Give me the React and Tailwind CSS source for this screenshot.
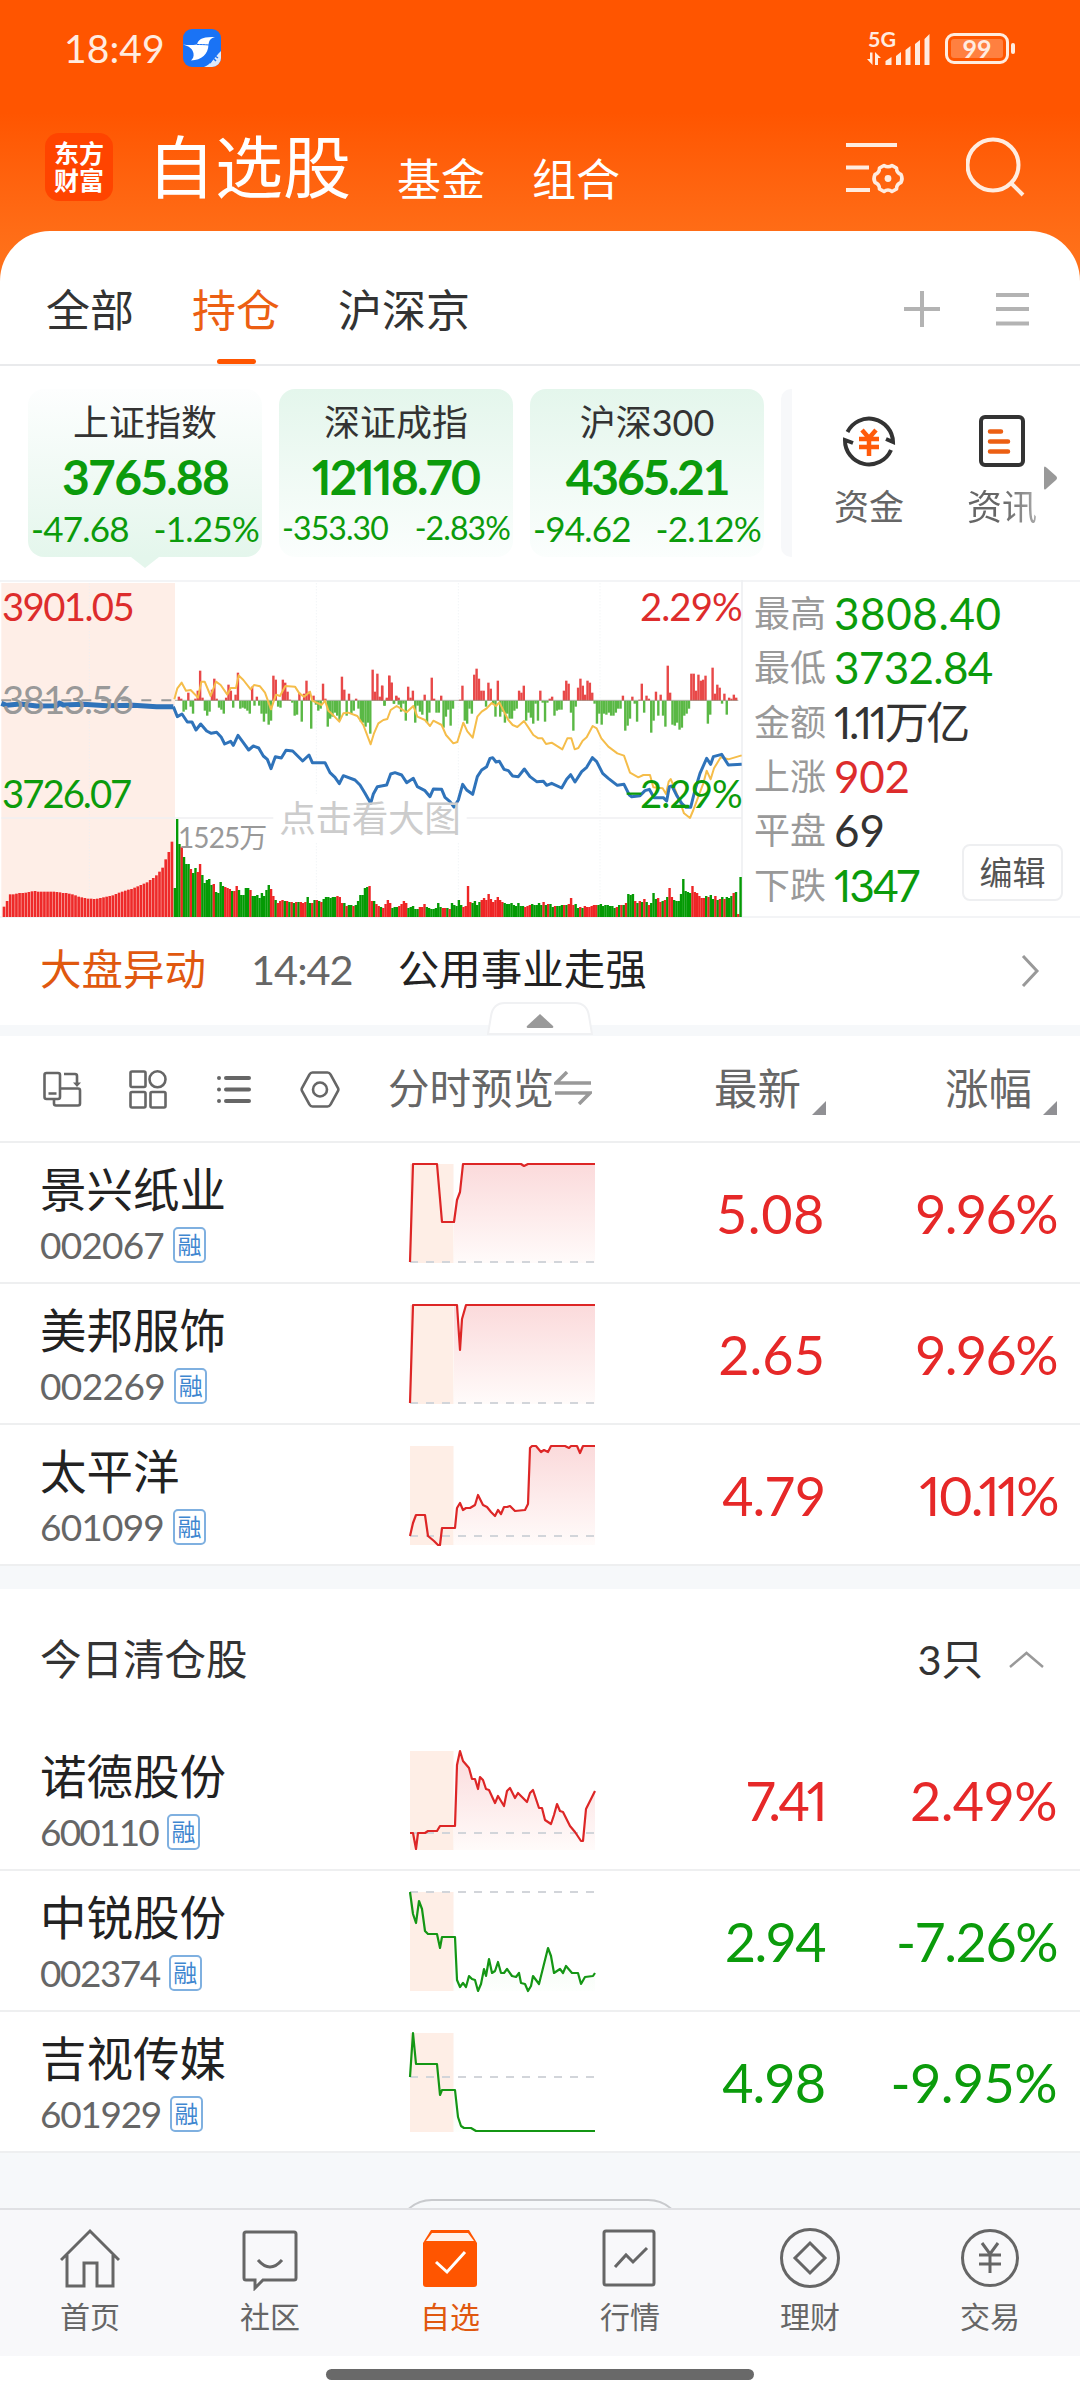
import React from "react";

const cards = [
    { name: "上证指数", price: "3765.88", diff: "-47.68", pct: "-1.25%", active: true, track: "tracking-[-1.8px]" },
    { name: "深证成指", price: "12118.70", diff: "-353.30", pct: "-2.83%", small: true, track: "proportional-nums tracking-[-2px]" },
    { name: "沪深300", price: "4365.21", diff: "-94.62", pct: "-2.12%", track: "tracking-[-2.3px]" },
];

const stats = [
    { label: "最高", value: "3808.40", color: "text-[#0b9b0b] tracking-[0.6px]" },
    { label: "最低", value: "3732.84", color: "text-[#0b9b0b] tracking-[-0.7px]" },
    { label: "金额", value: "1.11万亿", color: "text-[#333] proportional-nums tracking-[-2.5px]" },
    { label: "上涨", value: "902", color: "text-[#dd2c2c] tracking-[-0.3px]" },
    { label: "平盘", value: "69", color: "text-[#333]" },
    { label: "下跌", value: "1347", color: "text-[#0b9b0b] proportional-nums tracking-[-2px]" },
];

const holdings = [
    { name: "景兴纸业", code: "002067", price: "5.08", pct: "9.96%", up: true, base: 98,
      codeTrack: "tracking-[-0.8px]", priceTrack: "tracking-[0.6px]", pctTrack: "tracking-[-1.6px]",
      line: "0,98 3,0 27,0 32,58 44,58 47,36 50,28 53,0 111,0 114,2 118,0 185,0" },
    { name: "美邦服饰", code: "002269", price: "2.65", pct: "9.96%", up: true, base: 98,
      codeTrack: "tracking-[-0.6px]", priceTrack: "tracking-[0px]", pctTrack: "tracking-[-1.6px]",
      line: "0,98 3,0 47,0 50,45 52,14 56,0 185,0" },
    { name: "太平洋", code: "601099", price: "4.79", pct: "10.11%", up: true, base: 90,
      codeTrack: "tracking-[-0.8px]", priceTrack: "tracking-[-1px]", pctTrack: "proportional-nums tracking-[-2.5px]",
      line: "0,90 3,77 6,69 15,69 18,90 24,95 28,99 30,99 32,82 45,82 47,62 50,57 53,64 56,62 60,62 65,59 68,49 73,59 77,61 81,66 85,70 88,64 91,68 94,61 97,61 100,60 105,65 115,64 118,58 120,2 122,0 126,0 131,6 134,4 138,6 141,0 155,0 159,2 161,0 167,0 170,7 173,0 185,0" },
];

const cleared = [
    { name: "诺德股份", code: "600110", price: "7.41", pct: "2.49%", up: true, base: 82,
      codeTrack: "tracking-[-1.8px]", priceTrack: "proportional-nums tracking-[-3px]", pctTrack: "tracking-[-0.6px]",
      line: "0,82 3,82 6,98 8,82 15,82 18,80 27,80 30,75 45,75 47,14 50,0 53,10 59,17 62,28 65,28 68,38 70,26 73,29 76,38 79,39 85,52 88,45 94,55 97,40 100,37 105,47 108,42 117,51 120,42 123,39 129,57 132,57 135,69 141,73 144,64 147,53 150,60 153,61 160,75 165,81 171,90 173,90 176,58 179,52 182,46 185,40" },
    { name: "中锐股份", code: "002374", price: "2.94", pct: "-7.26%", up: false, base: 0,
      codeTrack: "tracking-[-1.5px]", priceTrack: "tracking-[-1.6px]", pctTrack: "tracking-[-1.5px]",
      line: "0,0 3,22 6,31 9,9 12,17 15,39 18,42 27,42 30,56 32,45 45,45 47,88 50,95 53,91 56,95 59,84 62,87 65,88 68,99 71,92 74,77 76,84 79,67 82,81 85,79 88,70 91,81 94,81 97,77 102,84 106,85 109,81 111,91 115,92 118,99 121,94 123,84 129,92 135,68 138,56 141,64 144,81 150,77 153,81 156,74 162,81 168,81 171,92 175,85 183,84 185,81" },
    { name: "吉视传媒", code: "601929", price: "4.98", pct: "-9.95%", up: false, base: 44,
      codeTrack: "tracking-[-1.3px]", priceTrack: "tracking-[-1px]", pctTrack: "tracking-[-0.6px]",
      line: "0,44 3,0 6,31 27,31 30,62 32,57 45,57 48,84 51,93 54,95 61,95 66,98 185,98" },
];

// auction volume, then minute volume (height + direction), chart units are thirds of a pixel
const auction = [1010, 993, 973, 973, 971, 969, 969, 968, 966, 964, 963, 965, 965, 965, 965, 965, 965, 966, 967, 969, 969, 971, 973, 976, 980, 982, 984, 986, 986, 987, 986, 984, 982, 980, 978, 976, 972, 968, 965, 962, 959, 957, 953, 949, 945, 941, 937, 930, 924, 916, 905, 893, 868, 846, 815];

const volume = "29g 98g 73g 70r 60g 53g 53g 48r 44g 49g 45r 53r 42g 34g 37g 38g 32g 33r 25g 24g 35g 31g 30r 29r 28r 26g 26r 31r 27g 22g 22g 29g 29g 27r 21g 21g 22g 19g 24g 21g 27g 32g 28r 21r 17g 14r 16r 17r 16g 16r 15g 15r 14g 15r 15g 15r 14r 15r 20g 14g 14r 17g 17r 16g 15r 18g 20g 20g 19g 20g 20g 21r 20r 14r 14g 11r 12g 12g 11r 12g 16g 22g 22g 29g 30g 31r 16r 16g 13r 11r 10g 9r 13r 17r 14r 9g 10g " +
    "10g 11r 13r 16r 14r 9g 10g 11g 8g 8g 10r 10r 13r 10g 9g 8g 8g 9g 14g 10g 9r 9r 9g 8r 14g 12g 11g 17g 12g 10r 11r 31r 15r 14g 16g 12g 15g 17r 19r 17r 23r 18r 15r 17r 20r 17r 15r 14g 13g 13g 14g 12g 11g 14g 11g 11g 10r 11r 12r 13g 12g 12g 14g 12g 15r 12g 13r 13g 10g 11r 11g 11g 12g 12r 12g 13r 19r 12r 13g 9g 10r 9g 11r 10r 10r 11r 12r 12r 12g 13g 11g 12g 12g 11g 11g 9g 10r 12g 12r 12g 14r 23g 22g 23g 16r 14g 16r 15g 18r 15g 12r 14g 24g 18g 19r 15r 16g 17r 20g 29r 20r 17g 16g 16g 23g 38g 26g 25g 24g 31r 25r 24r 21r 19r 19r 21g 20r 22g 18g 21r 17g 18r 20g 18r 20g 19g 21g 24r 25g 3r 40g";

const energyLeft = [4, 2, -11, -9, 8, -6, -13, 2, 10, 30, 3, -10, -15, -11, 11, 22, 2, -7, -9, -13, 3, 16, 10, -7, 6, 28, -8, -7, -8, -10, -13, 14, -5, 4, -5, -13, -21, -13, -24, -20, 25, 21, -6, -7, 21, 18, 9, 1, -2, -15, -14, 8, -21, 7, 20, 9, -28, 5, -4, -10, -8, 17, 2, -26, -18, -16, -12, -15, -20, 24, 11, -15, 7, -13, -10, 2, -8, -21, -22, -26, -22, -33, 31, 9, 27, 4, 15, -5, 3, 25, 18, -3, 5, 3];
const energyRight = [15, -5, 2, 25, 18, -3, 4, -4, -11, -3, -20, 14, 3, 10, -22, -5, -11, -14, 6, -22, -12, 23, 2, -12, -12, 5, -27, -16, -9, -25, -8, 0, 0, 1, 15, -20, -23, -8, -13, 26, 32, 22, 10, 10, -6, 18, 12, -3, -16, 20, -16, -11, -22, -13, -18, -18, -10, -8, 10, 8, 15, -20, -12, -17, -23, -3, -20, 10, -2, -21, -2, 2, 4, -15, -10, -9, -9, 10, 20, 17, -12, -30, -6, 13, 22, 15, 6, 20, 18, 8, -3, -23, -13, -24, -13, -14, -12, -15, -15, -12, -8, -8, 5, -30, -25, -18, 4, -3, -21, 1, 17, -12, 5, 2, -32, -20, 9, -15, 6, -15, -26, 35, 8, -24, -25, -22, -29, -27, -15, -13, -8, 27, 27, 10, 26, 20, 21, 25, -23, -14, 33, 7, 16, 13, -3, 7, -14, 3, 2, 6, 3];

function StatusBar() {
    return (
        <div className="flex h-[96px] items-center pl-[64px] pr-[65px] text-[#ffece0]">
            <span className="text-[39px] tracking-[0.1px]">18:49</span>
            <svg className="ml-[18px]" width="38" height="38" viewBox="0 0 38 38">
                <rect width="38" height="38" rx="9" fill="#1a73f5" />
                <path d="M0 15.500q7 1 14 0c1-5 5-8 18-7.500-4 1-6 3-6.500 8C25 25 19 31 8 31.500c2-2 3-4 2.500-7C10 20 6 17 0 15.500z" fill="#fff" />
                <path d="M14 15.500c3 0 7 0 12 .5" stroke="#1a73f5" strokeWidth="1" fill="none" />
                <path d="M38 22v7a9 9 0 0 1-9 9h-8c6-2 10-9 17-16z" fill="#dce9fb" />
                <path d="M27 34l3-5 3 3M32 27l3 2" stroke="#1a73f5" strokeWidth="1.5" fill="none" />
            </svg>
            <svg className="ml-auto overflow-visible" width="66" height="40" viewBox="0 -2 66 40" fill="#ffece0">
                <text x="1" y="17" fontSize="21" fontWeight="700" textLength="28" lengthAdjust="spacingAndGlyphs">5G</text>
                <path d="M3 22.500h2.500v12.500L0 29h3zM8 35V22l6 6h-3v7z" />
                <path d="M18.500 31l6-4v8h-6zM29 26l5-4v13h-5zM38.500 20l5-4v19h-5zM48 14l5-4v25h-5zM57.500 9l5-5v31h-5z" />
            </svg>
            <div className="ml-[12px] flex h-[31px] w-[64px] items-center rounded-[9px] border-[3px] border-[#ffece0] p-[3px]">
                <div className="flex h-full w-[52px] items-center justify-center rounded-[3px] bg-[#ff8040] text-[25px] font-bold leading-none">99</div>
            </div>
            <div className="ml-[2px] h-[11px] w-[4px] rounded-full bg-[#ffece0]" />
        </div>
    );
}

function Header() {
    return (
        <div className="flex h-[135px] pl-[45px] text-white">
            <div className="mt-[37px] flex h-[68px] w-[68px] flex-col items-center justify-center rounded-[14px] bg-[#ff4400] text-[25px] font-bold leading-[27px]">
                <span>东方</span>
                <span>财富</span>
            </div>
            <span className="ml-[34px] mt-[37px] text-[68px] leading-none">自选股</span>
            <span className="ml-[46px] mt-[61px] text-[44px] leading-none">基金</span>
            <span className="ml-[47px] mt-[61px] text-[44px] leading-none">组合</span>
            <svg className="ml-auto mt-[44px]" width="60" height="56" viewBox="0 0 60 56" fill="none" stroke="#ffece0" strokeWidth="4">
                <path d="M0 5h51M0 27.500h23M0 50h24" />
                <path strokeWidth="3.600" strokeLinejoin="round" d="M38 25.500q4 2.500 8 0l4.500 2.500q0 5 4.500 6.500q2 4 0 8q-4.500 1.500-4.500 6.500l-4.500 2.500q-4-3-8 0l-4.500-2.500q0-5-4.500-6.500q-2-4 0-8q4.500-1.500 4.500-6.500z" />
                <circle cx="42" cy="38.500" r="3.400" fill="#ffece0" stroke="none" />
            </svg>
            <svg className="ml-[60px] mr-[55px] mt-[41px]" width="59" height="60" viewBox="0 0 59 60" fill="none" stroke="#ffece0" strokeWidth="4">
                <circle cx="27" cy="28" r="25.500" />
                <path d="M44 45l13 13" />
            </svg>
        </div>
    );
}

function Tabs() {
    return (
        <div className="flex h-[135px] border-b-2 border-[#e9eaec] pl-[46px] text-[44px] leading-none text-[#333]">
            <span className="mt-[57px]">全部</span>
            <div className="ml-[58px] flex flex-col items-center text-[#ec5f13]">
                <span className="mt-[57px]">持仓</span>
                <div className="mt-[27px] h-[6px] w-[39px] rounded-[3px] bg-[#ff5500]" />
            </div>
            <span className="ml-[58px] mt-[57px]">沪深京</span>
            <svg className="ml-auto mt-[60px]" width="36" height="36" viewBox="0 0 36 36" stroke="#b3b3b3" strokeWidth="4">
                <path d="M0 18h36M18 0v36" />
            </svg>
            <svg className="ml-[56px] mr-[51px] mt-[60px]" width="33" height="36" viewBox="0 0 33 36" stroke="#b3b3b3" strokeWidth="4">
                <path d="M0 4h33M0 18h33M0 32.500h33" />
            </svg>
        </div>
    );
}

function IndexCards() {
    return (
        <div className="flex h-[214px] pl-[28px] pt-[23px]">
            {cards.map((card) => (
                <div key={card.name} className="mr-[17px] w-[234px]">
                    <div className={`flex h-[168px] flex-col items-center whitespace-nowrap rounded-[16px] leading-none text-[#0b9b0b] ${card.active ? "bg-linear-to-b from-[#fdfefe] to-[#e4f6ec]" : "bg-linear-to-b from-[#e4f6ec] to-[#fbfefd]"}`}>
                        <span className="mt-[15px] text-[36px] text-[#333]">{card.name}</span>
                        <span className={`mt-[13px] text-[48px] font-bold ${card.track}`}>{card.price}</span>
                        <div className={`mt-[9px] flex h-[36px] w-[228px] items-center justify-between ${card.small ? "text-[32px] tracking-[-0.9px]" : "text-[35px] tracking-[-0.8px]"}`}>
                            <span>{card.diff}</span>
                            <span>{card.pct}</span>
                        </div>
                    </div>
                    {card.active && (
                        <svg className="mx-auto" width="28" height="11" viewBox="0 0 28 11">
                            <path d="M0 0h28L14 11z" fill="#e4f6ec" />
                        </svg>
                    )}
                </div>
            ))}
            <div className="h-[168px] w-[11px] rounded-l-[10px] bg-[#f7f8fa]" />
            <div className="ml-[42px] flex w-[70px] flex-col items-center text-[35px] leading-none text-[#666]">
                <svg className="mt-[24px]" width="56" height="56" viewBox="0 0 56 56" fill="none" stroke="#333" strokeWidth="4">
                    <path d="M6.500 19A24 24 0 0 1 52 29l-7-3M50 37A24 24 0 0 1 4 27l8 3" />
                    <path stroke="#ff5a0a" strokeWidth="4.500" d="M21 17l7 8 7-8M18 26h20M18 34h20M28 25v18" />
                </svg>
                <span className="mt-[20px]">资金</span>
            </div>
            <div className="ml-[63px] flex w-[70px] flex-col items-center text-[35px] leading-none text-[#666]">
                <svg className="mt-[26px]" width="46" height="52" viewBox="0 0 46 52" fill="none" stroke="#333" strokeWidth="4">
                    <rect x="2" y="2" width="42" height="48" rx="4" />
                    <path stroke="#ec5f13" strokeWidth="4.500" strokeLinecap="round" d="M11 16.500h11M11 26.500h18M11 36.500h18" />
                </svg>
                <span className="mt-[22px] bg-linear-to-r from-[#666] from-50% to-[#aaa] bg-clip-text text-transparent">资讯</span>
            </div>
            <svg className="ml-[7px] mt-[77px]" width="13" height="24" viewBox="0 0 13 24">
                <path d="M0 2q0-3 3 0l9 8q2 2 0 4l-9 8q-3 3-3 0z" fill="#999" />
            </svg>
        </div>
    );
}

function MinuteChart() {
    const bars = volume.trim().split(" ");
    return (
        <svg width="744" height="338" viewBox="0 30 2232 1014" fill="none">
            <rect x="4" y="39" width="521" height="1002" fill="#feeee7" />
            <path d="M268 40v1000M949 40v632M949 820v222M1375 40v632M1375 820v222M1800 40v1000" stroke="#eceff2" strokeWidth="3" strokeDasharray="3 6" />
            <path d="M4 744h816M1400 744h826M2226 30v1012" stroke="#eff0f2" strokeWidth="5" />
            {auction.map((top, i) => (
                <rect key={i} x={8 + i * 9.33} y={top} width="8" height={1041 - top} fill="#ee2a2a" />
            ))}
            {bars.map((bar, i) => {
                const h = parseInt(bar) * 3;
                return <rect key={i} x={521 + i * (1704 / bars.length)} y={1041 - h} width="7.2" height={h} fill={bar.endsWith("g") ? "#049a04" : "#ee2525"} />;
            })}
            {energyLeft.map((v, i) => (
                <rect key={i} x={533 + i * 7.09} y={v > 0 ? 392 - v * 3 : 392} width="7.2" height={Math.abs(v) * 3} fill={v > 0 ? "#e84848" : "#5ab845"} />
            ))}
            {energyRight.map((v, i) => (
                <rect key={i} x={1143 + i * 7.08} y={v > 0 ? 392 - v * 3 : 392} width="7.2" height={Math.abs(v) * 3} fill={v > 0 ? "#e84848" : "#5ab845"} />
            ))}
            <path d="M4 391h521" stroke="#999" strokeWidth="6" strokeDasharray="30 30" />
            <path d="M525 391h1690" stroke="#8a8f80" strokeWidth="2" />
            <polyline stroke="#f5bd4a" strokeWidth="6" strokeLinejoin="round" points="523,388 532,355 545,338 558,362 572,360 594,383 604,335 614,335 632,378 648,335 662,345 682,374 692,354 708,354 716,316 730,330 752,358 762,345 780,349 795,368 813,418 828,374 840,378 856,348 885,350 898,370 912,380 930,365 937,392 965,405 975,392 985,422 1000,436 1018,455 1030,430 1045,428 1072,438 1090,465 1112,523 1122,490 1135,460 1150,450 1162,447 1172,420 1190,408 1220,427 1240,408 1252,440 1275,450 1290,468 1300,452 1325,465 1338,495 1360,520 1372,516 1390,458 1402,484 1418,503 1432,440 1445,425 1460,415 1475,399 1488,408 1498,397 1512,425 1525,450 1538,465 1552,471 1572,453 1585,472 1600,495 1615,505 1627,505 1638,522 1655,518 1687,538 1702,505 1714,505 1724,538 1735,534 1748,512 1760,502 1778,468 1790,475 1804,505 1825,530 1852,550 1872,557 1890,608 1915,622 1930,615 1950,615 1960,652 1988,655 1998,672 2006,635 2012,627 2024,655 2038,690 2052,730 2070,744 2080,720 2095,680 2110,640 2120,602 2132,628 2142,595 2162,562 2185,568 2205,562 2225,556" />
            <polyline stroke="#2f73ba" strokeWidth="15" strokeLinejoin="round" points="4,400 20,406 60,402 110,408 170,407 178,399 190,405 250,403 320,407 400,406 470,410 520,410" />
            <polyline stroke="#2f73ba" strokeWidth="9" strokeLinejoin="round" points="520,410 532,440 546,432 562,456 576,456 588,480 602,462 620,483 634,490 650,487 664,502 674,522 692,514 700,526 714,496 730,518 746,540 760,528 776,534 790,558 802,568 813,596 826,560 844,564 858,541 878,543 908,573 927,555 937,578 975,578 990,608 1005,622 1018,641 1030,617 1065,630 1080,645 1095,670 1112,700 1120,672 1132,650 1160,645 1172,612 1185,608 1205,615 1220,638 1240,625 1252,650 1275,662 1290,680 1300,657 1325,658 1335,682 1350,695 1362,711 1375,690 1388,643 1400,660 1418,673 1432,620 1445,600 1460,590 1470,565 1478,563 1488,576 1498,574 1512,598 1525,602 1538,618 1555,620 1573,597 1590,620 1610,635 1630,634 1640,646 1655,640 1685,654 1700,628 1712,614 1725,636 1745,605 1760,592 1777,563 1790,575 1808,610 1825,625 1852,646 1872,643 1888,675 1895,680 1920,677 1935,662 1948,658 1962,683 1990,683 2000,693 2008,650 2016,648 2030,676 2045,700 2058,712 2072,712 2085,660 2100,610 2120,565 2132,583 2140,560 2165,553 2185,585 2225,583" />
            <path d="M1880 671h44" stroke="#0b9b0b" strokeWidth="7" />
            <g fontSize="115">
                <text x="6" y="154" fill="#dd2c2c" textLength="398">3901.05</text>
                <text x="6" y="432" fill="#999" textLength="396">3813.56</text>
                <text x="6" y="715" fill="#0b9b0b" textLength="391">3726.07</text>
                <text x="1920" y="154" fill="#dd2c2c" textLength="308">2.29%</text>
                <text x="1920" y="715" fill="#0b9b0b" textLength="308">2.29%</text>
            </g>
            <text x="534" y="833" fontSize="84" fill="#999" textLength="268">1525万</text>
            <text x="838" y="785" fontSize="110" fill="#ccc" textLength="545">点击看大图</text>
        </svg>
    );
}

function MarketPanel() {
    return (
        <div className="flex h-[338px] border-y-2 border-[#f3f4f6]">
            <div className="-mt-[2px]"><MinuteChart /></div>
            <div className="ml-[10px] mt-[4px] w-[210px]">
                {stats.map((s) => (
                    <div key={s.label} className="flex h-[54.3px] items-center whitespace-nowrap leading-none">
                        <span className="w-[80px] shrink-0 text-[36px] text-[#999]">{s.label}</span>
                        <span className={`text-[44px] ${s.color}`}>{s.value}</span>
                    </div>
                ))}
            </div>
            <div className="-ml-[2px] mt-[262px] flex h-[57px] w-[101px] items-center justify-center rounded-[8px] border-2 border-[#eeeff1] text-[33px] text-[#555]">编辑</div>
        </div>
    );
}

function NewsBar() {
    return (
        <>
            <div className="relative flex h-[107px] items-start pl-[40px] text-[41.500px] leading-none">
                <span className="mt-[31px] text-[#e0580f]">大盘异动</span>
                <span className="ml-[45px] mt-[31px] tracking-[-1px] text-[#666]">14:42</span>
                <span className="ml-[45px] mt-[31px] text-[#222]">公用事业走强</span>
                <svg className="ml-auto mr-[40px] mt-[37px]" width="19" height="32" viewBox="0 0 19 32" fill="none" stroke="#999" strokeWidth="3">
                    <path d="M2 1l14 15L2 31" />
                </svg>
                <svg className="absolute left-[487px] top-[84px] z-10" width="106" height="34" viewBox="0 0 106 34">
                    <path d="M1 32L4 14Q6 1 18 1H88Q100 1 102 14L105 32z" fill="#fff" stroke="#f0f1f3" strokeWidth="2" />
                    <path d="M53 12L66 24q1 2-1 2H41q-2 0-1-2z" fill="#999" />
                </svg>
            </div>
            <div className="h-[11px] bg-[#f6f8fa]" />
        </>
    );
}

function SortMark() {
    return (
        <svg className="ml-[11px] mt-[65px]" width="14" height="14" viewBox="0 0 14 14">
            <path d="M14 0v14H0z" fill="#909094" />
        </svg>
    );
}

function Toolbar() {
    return (
        <div className="flex h-[107px] border-b-2 border-[#eeeff0] pl-[43px] text-[41.500px] leading-none text-[#666]">
            <svg className="mt-[35px]" width="39" height="37" viewBox="0 0 39 37" fill="none" stroke="#666" strokeWidth="2.600">
                <rect x="1.500" y="2" width="15.500" height="26" rx="2" />
                <path d="M5.500 22.500h8M21 3h11q2 0 2 2v9M11 28.500v4q0 2 2 2h22q2 0 2-2v-13q0-2-2-2H18" />
                <path d="M30 11.500h8L34 16z" fill="#666" stroke="none" />
            </svg>
            <svg className="ml-[47px] mt-[34px]" width="38" height="39" viewBox="0 0 38 39" fill="none" stroke="#666" strokeWidth="2.600">
                <rect x="1.500" y="1.500" width="15" height="15.500" rx="1.500" />
                <circle cx="28.500" cy="9.300" r="8" />
                <rect x="1.500" y="22" width="15" height="15.500" rx="1.500" />
                <rect x="21.500" y="22" width="15" height="15.500" rx="1.500" />
            </svg>
            <svg className="ml-[49px] mt-[38px]" width="36" height="31" viewBox="0 0 36 31" fill="none" stroke="#666" strokeWidth="4" strokeLinecap="round">
                <path d="M10 4h23M10 15.500h23M10 27h23M3 4h0M3 15.500h0M3 27h0" />
            </svg>
            <svg className="ml-[48px] mt-[34px]" width="40" height="39" viewBox="0 0 40 39" fill="none" stroke="#666" strokeWidth="2.600">
                <path d="M12.500 2.500h15q2 0 3 2L38 18q.7 1.500 0 3l-7.500 13.500q-1 2-3 2h-15q-2 0-3-2L2 21q-.7-1.500 0-3L9.500 4.500q1-2 3-2z" />
                <circle cx="20" cy="19.500" r="7" />
            </svg>
            <span className="ml-[48px] mt-[32px]">分时预览</span>
            <svg className="mt-[35px]" width="38" height="34" viewBox="0 0 38 34" fill="none" stroke="#999" strokeWidth="3.500">
                <path d="M13 1L2 12h35M25 33l11-11H1" />
            </svg>
            <span className="ml-[122px] mt-[31px] text-[43.500px]">最新</span>
            <SortMark />
            <span className="ml-[119px] mt-[31px] text-[43.500px]">涨幅</span>
            <SortMark />
        </div>
    );
}

function Sparkline({ stock }) {
    const stroke = stock.up ? "#dd2626" : "#149614";
    const id = "fill" + stock.code;
    return (
        <svg width="189" height="103" viewBox="-2 -2 189 103" fill="none">
            <defs>
                <linearGradient id={id} gradientUnits="userSpaceOnUse" x1="0" y1="0" x2="0" y2="99">
                    <stop offset="0" stopColor={stock.up ? "#fbdadb" : "#e2f4e2"} />
                    <stop offset="1" stopColor={stock.up ? "#fffbfa" : "#fdfffd"} />
                </linearGradient>
                <clipPath id={id + "c"}><rect x="44" y="-1" width="142" height="101" /></clipPath>
            </defs>
            <rect width="43.500" height="99" fill="#feeee6" />
            <polygon points={`0,99 ${stock.line} 185,99`} fill={`url(#${id})`} clipPath={`url(#${id}c)`} />
            <path d={`M0 ${stock.base}h185`} stroke="#d2d5da" strokeWidth="2" strokeDasharray="8 8" />
            <polyline points={stock.line} stroke={stroke} strokeWidth="2.200" strokeLinejoin="round" />
        </svg>
    );
}

function StockRow({ stock }) {
    const color = stock.up ? "text-[#e62828]" : "text-[#0b9b0b]";
    return (
        <div className="flex h-[141px] border-b-2 border-[#eeeff0] pl-[40px] pr-[23px]">
            <div className="w-[368px] whitespace-nowrap">
                <div className="mt-[23px] text-[46.500px] leading-none text-[#222]">{stock.name}</div>
                <div className="mt-[14px] flex items-center">
                    <span className={`-mt-[1px] text-[37px] leading-none text-[#666] ${stock.codeTrack}`}>{stock.code}</span>
                    <span className="ml-[9px] flex h-[36px] w-[33px] items-center justify-center rounded-[5px] border-2 border-[#7fb0e0] text-[24px] leading-none text-[#3f87d0]">融</span>
                </div>
            </div>
            <div className="mt-[19px]"><Sparkline stock={stock} /></div>
            <span className={`w-[228px] text-right text-[54px] leading-[141px] ${stock.priceTrack} ${color}`}>{stock.price}</span>
            <span className={`ml-auto text-right text-[54px] leading-[141px] ${stock.pctTrack} ${color}`}>{stock.pct}</span>
        </div>
    );
}

const navItems = [
    { label: "首页", icon: <path d="M1 33L30 4l29 29M7 28v31h17V36h13v23h16V28" /> },
    { label: "社区", icon: <path d="M6 5h48q2 0 2 2v44q0 2-2 2H23l-8 8v-8H6q-2 0-2-2V7q0-2 2-2zM18 33q12 14 24 0" /> },
    { label: "自选", active: true, icon: (
        <>
            <path d="M3 16L11 3h38l8 13v41q0 3-3 3H6q-3 0-3-3z" fill="#ff5500" stroke="none" />
            <path d="M12 6h36l6 8H6z" fill="#fff2ea" stroke="none" />
            <path d="M16 35l11 10 18-20" stroke="#fff" />
        </>
    ) },
    { label: "行情", icon: <path d="M6 4h46q2 0 2 2v50q0 2-2 2H6q-2 0-2-2V6q0-2 2-2zM15 40l11-12 7 7 14-14" /> },
    { label: "理财", icon: <><circle cx="30" cy="31" r="28.500" /><path d="M30 16l15 15-15 15-15-15z" /></> },
    { label: "交易", icon: <><circle cx="30" cy="31" r="27.500" /><path d="M22 16l8 11 8-11M19 28h22M19 37h22M30 27v19" /></> },
];

function BottomNav() {
    return (
        <div className="flex h-[148px] border-t-2 border-[#e0e1e4] bg-[#f8f8fa]">
            {navItems.map((item) => (
                <div key={item.label} className={`flex flex-1 flex-col items-center text-[30px] leading-none ${item.active ? "text-[#e0580f]" : "text-[#666]"}`}>
                    <svg className="mt-[17px]" width="60" height="64" viewBox="0 0 60 64" fill="none" stroke="#666" strokeWidth="3">
                        {item.icon}
                    </svg>
                    <span className="mt-[10px]">{item.label}</span>
                </div>
            ))}
        </div>
    );
}

function App() {
    return (
        <div className="flex h-[2400px] w-[1080px] flex-col overflow-hidden bg-white font-[Lato,'Noto_Sans_CJK_SC',sans-serif]">
            <div className="-mb-[50px] h-[281px] shrink-0 bg-linear-to-b from-[#ff5500] from-40% to-[#ff7019] to-90%">
                <StatusBar />
                <Header />
            </div>
            <div className="shrink-0 rounded-t-[50px] bg-white">
                <Tabs />
                <IndexCards />
                <MarketPanel />
                <NewsBar />
                <Toolbar />
                {holdings.map((stock) => <StockRow key={stock.code} stock={stock} />)}
                <div className="h-[23px] bg-[#f6f8fa]" />
                <div className="flex h-[141px] items-center pl-[40px] pr-[36px] text-[41.500px] leading-none text-[#333]">
                    <span>今日清仓股</span>
                    <span className="ml-auto">3只</span>
                    <svg className="ml-[26px]" width="35" height="18" viewBox="0 0 35 18" fill="none" stroke="#999" strokeWidth="2.500">
                        <path d="M1 16L17.500 2 34 16" />
                    </svg>
                </div>
                {cleared.map((stock) => <StockRow key={stock.code} stock={stock} />)}
            </div>
            <div className="flex h-[55px] shrink-0 justify-center overflow-hidden bg-[#f6f8fa] pt-[46px]">
                <div className="h-[72px] w-[288px] shrink-0 rounded-full border-2 border-[#c8cacd]" />
            </div>
            <BottomNav />
            <div className="flex justify-center pt-[13px]">
                <div className="h-[11px] w-[428px] rounded-full bg-[#696969]" />
            </div>
        </div>
    );
}

export default App;
